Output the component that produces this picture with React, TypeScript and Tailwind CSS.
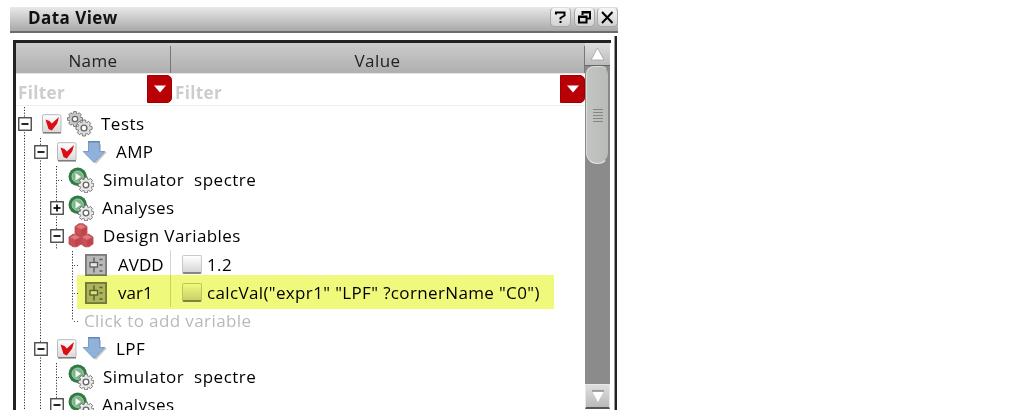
import React from "react";

type Guide = "none" | "line" | "tee" | "end" | "minus" | "plus" | "start";

const label = "whitespace-pre text-[17px] leading-[28px] font-medium text-black";

function GuideCell({ kind }: { kind: Guide }) {
  const hasBox = kind === "minus" || kind === "plus" || kind === "start";
  const bottom = kind === "end" ? 14 : 28;
  const top = kind === "start" ? -3 : 0;
  return (
    <svg width="16" height="28" viewBox="0 0 16 28" className="shrink-0 overflow-visible">
      {kind !== "none" && (
        <path d={`M8.5 ${top}V${bottom}`} stroke="#333" strokeDasharray="1.2 1.6" fill="none" />
      )}
      {(kind === "tee" || kind === "end") && (
        <path d="M10 14.5H14" stroke="#444" strokeDasharray="1 2" fill="none" />
      )}
      {hasBox && (
        <g>
          <rect x="2.75" y="7.75" width="12.5" height="12.5" fill="#fff" stroke="#4d4d4d" strokeWidth="1.4" />
          <path d="M5.5 14H12.5" stroke="#000" strokeWidth="1.7" />
          {kind === "plus" && <path d="M9 10.5V17.5" stroke="#000" strokeWidth="1.7" />}
        </g>
      )}
    </svg>
  );
}

function CheckBox() {
  return (
    <svg width="20" height="20" viewBox="0 0 20 20" className="shrink-0">
      <defs>
        <linearGradient id="box" x2="0" y2="1">
          <stop stopColor="#fff" />
          <stop offset="1" stopColor="#d8d8d8" />
        </linearGradient>
      </defs>
      <rect x=".5" y=".7" width="18.5" height="18" rx="1.5" fill="url(#box)" stroke="#b9b9b9" />
      <path d="M1 18.8H19" stroke="#777" strokeWidth="1.4" />
      <path d="M3.5 5.5L7.5 7L9.8 9.5L17 3L15.2 9.5L9.8 16.5L6.5 15Z" fill="#dc0c14" />
    </svg>
  );
}

function EmptyBox() {
  return (
    <div className="h-[19px] w-5 shrink-0 rounded-[2px] border border-[#c9c9c9] border-b-2 border-b-[#858585] bg-linear-to-b from-white to-[#d6d6d6]" />
  );
}

function Gear({ x, y, s, fill }: { x: number; y: number; s: number; fill: string }) {
  const teeth = [0, 45, 90, 135, 180, 225, 270, 315];
  return (
    <g transform={`translate(${x} ${y}) scale(${s})`}>
      {teeth.map((a) => (
        <path key={a} d="M-2 -5L-1.5 -8H1.5L2 -5" transform={`rotate(${a})`} fill={fill} stroke="#6b6b6b" strokeWidth=".9" />
      ))}
      <circle r="5.8" fill={fill} />
      <circle r="2.9" fill="#fff" stroke="#666" strokeWidth="1.4" />
    </g>
  );
}

function GearsIcon() {
  return (
    <svg width="26" height="26" viewBox="0 0 26 26" className="shrink-0">
      <Gear x={8} y={8} s={0.93} fill="#c9c9c9" />
      <Gear x={17} y={17} s={1} fill="#dcdcdc" />
    </svg>
  );
}

function RunIcon() {
  return (
    <svg width="26" height="26" viewBox="0 0 26 26" className="shrink-0">
      <circle cx="9.7" cy="9.7" r="9.2" fill="#2f7b43" />
      <circle cx="9.7" cy="9.7" r="5.7" fill="#7db48a" stroke="#a9cfb2" strokeWidth="1" />
      <path d="M7.5 6L13 9.7L7.5 13.4Z" fill="#f4fbf5" />
      <Gear x={18} y={18} s={0.97} fill="#e9e9e9" />
    </svg>
  );
}

function ArrowIcon() {
  return (
    <svg width="25" height="25" viewBox="0 0 25 25" className="shrink-0">
      <path d="M9 4H19V12H25L14 24L4 12H9Z" fill="#c9c9c9" />
      <path d="M6.5 1.5H17.5V11.5H22.8L12 22.5L1.2 11.5H6.5Z" fill="#90b1da" stroke="#7a9bc5" />
      <path d="M6 1.8H18" stroke="#5f84b2" strokeWidth="1.3" />
    </svg>
  );
}

function CubesIcon() {
  const spots = [[13, 7], [7, 17.5], [19, 17.5]];
  return (
    <svg width="26" height="26" viewBox="0 0 26 26" className="shrink-0">
      {spots.map(([x, y]) => (
        <g key={`${x}-${y}`} transform={`translate(${x} ${y})`}>
          <path d="M-6 -3.5L-2 -6.3H2L6 -3.5V3.5L2 6.3H-2L-6 3.5Z" fill="#c94f54" stroke="#b5484d" strokeWidth=".8" />
          <path d="M-5 -3.3L0 -5.7L5 -3.3L0 -.8Z" fill="#dc7a7d" />
          <path d="M0 0L5.3 -2.5V3L0 5.8Z" fill="#bc464b" />
        </g>
      ))}
    </svg>
  );
}

function VariableIcon() {
  return (
    <svg width="22" height="22" viewBox="0 0 22 22" className="shrink-0">
      <rect x=".9" y=".9" width="20.2" height="20.2" fill="#b9b9b9" stroke="#747474" strokeWidth="1.7" />
      <path d="M9 3.5V18.5" stroke="#5d5d5d" strokeWidth="1.4" />
      <rect x="5" y="8.5" width="7.5" height="4.5" fill="#e8e8e8" stroke="#5d5d5d" strokeWidth="1.3" />
      <path d="M14.5 5.5H17.5M14.5 11H17.5M14.5 17H17.5" stroke="#5d5d5d" strokeWidth="1.4" />
    </svg>
  );
}

function Row({ guides, children }: { guides: Guide[]; children: React.ReactNode }) {
  return (
    <div className="flex h-[28.1px] shrink-0 items-center">
      {guides.map((g, i) => (
        <GuideCell key={i} kind={g} />
      ))}
      {children}
    </div>
  );
}

function TestRow({ name }: { name: string }) {
  return (
    <Row guides={["line", "minus"]}>
      <div className="ml-[9px]"><CheckBox /></div>
      <div className="ml-[5px]"><ArrowIcon /></div>
      <span className={`${label} ml-[9px] tracking-[0.4px]`}>{name}</span>
    </Row>
  );
}

function SimulatorRow() {
  return (
    <Row guides={["line", "line", "tee"]}>
      <div className="ml-1"><RunIcon /></div>
      <span className={`${label} ml-[9px] tracking-[0.5px]`}>Simulator  spectre</span>
    </Row>
  );
}

function AnalysesRow({ kind }: { kind: Guide }) {
  return (
    <Row guides={["line", "line", kind]}>
      <div className="ml-1"><RunIcon /></div>
      <span className={`${label} ml-[8px] tracking-[0.4px]`}>Analyses</span>
    </Row>
  );
}

function VariableRow({ name, value }: { name: string; value: string }) {
  return (
    <Row guides={["line", "line", "none", "tee"]}>
      <div className="ml-[5px]"><VariableIcon /></div>
      <span className={`${label} ml-[11px] w-[52px]`}>{name}</span>
      <div className="h-full w-px bg-[#d5d5d5]" />
      <div className="ml-[11px]"><EmptyBox /></div>
      <span className={`${label} ml-[5px] tracking-[0.36px]`}>{value}</span>
    </Row>
  );
}

function FilterField({ width }: { width: string }) {
  return (
    <div className={`flex items-start justify-between pt-px ${width}`}>
      <span className="pl-[2px] text-[17px] font-bold leading-[35px] tracking-[0.35px] text-[#cfcccf]">Filter</span>
      <div className="flex h-7 w-[25px] items-center justify-center rounded-r-[5px] border border-[#a00000] bg-[#b90007]">
        <svg width="12" height="8" viewBox="0 0 12 8"><path d="M0 .5H12L6 7.5Z" fill="#fff" /></svg>
      </div>
    </div>
  );
}

function TitleButton({ children }: { children: React.ReactNode }) {
  return (
    <div className="flex h-5 w-[21px] items-center justify-center rounded-[5px] border border-[#a6a6a6] border-t-[#dddddd] bg-linear-to-b from-[#f5f5f5] to-[#d2d2d2]">
      <svg width="15" height="15" viewBox="0 0 15 15" fill="none" stroke="#000" strokeWidth="2">{children}</svg>
    </div>
  );
}

function ScrollBar() {
  return (
    <div className="flex h-[366px] w-[25px] shrink-0 flex-col bg-[#8b8b8b]">
      <div className="flex h-[23px] items-center justify-center border-b border-[#666] bg-linear-to-b from-[#dedede] to-[#bcbcbc]">
        <svg width="15" height="14" viewBox="0 0 15 14"><path d="M7.5 1L14 13H1Z" fill="#fff" stroke="#999" strokeWidth=".7" /></svg>
      </div>
      <div className="mx-px flex h-[98px] flex-col items-center justify-center gap-[2px] rounded-t-[8px] rounded-b-[11px] border border-[#dadada] border-r-[#888] border-b-[#e2e2e2] bg-linear-to-r from-[#c2c5c2] to-[#b9bbb9]">
        {[0, 1, 2, 3, 4].map((n) => (
          <div key={n} className="h-px w-[10px] bg-[#858585]" />
        ))}
      </div>
      <div className="mt-auto flex h-[25px] items-center justify-center border border-b-2 border-[#e8e8e8] border-b-[#555] bg-linear-to-b from-[#dedede] to-[#bababa]">
        <svg width="14" height="13" viewBox="0 0 14 13"><path d="M1 1H13L7 12Z" fill="#fff" /><path d="M1 1H13" stroke="#777" strokeWidth="1.3" /></svg>
      </div>
    </div>
  );
}

export default function App() {
  return (
    <div className="h-[410px] w-[1013px] overflow-hidden bg-white pt-[7px] pl-[10px] font-['Open_Sans','Noto_Sans',sans-serif]">
      <header className="flex h-[26px] w-[608px] items-start justify-between border-b-2 border-[#6c6c6c] bg-linear-to-b from-[#e9e9e9] to-[#a9a9a9] pl-[18px]">
        <h1 className="text-[17px] font-bold leading-[21px] tracking-[0.45px] text-[#111]">Data View</h1>
        <div className="flex gap-[2.5px]">
          <TitleButton><path d="M3 4.5V2.5H11.5V5.5L7.5 8V9.5M7.5 11V13" /></TitleButton>
          <TitleButton>
            <path d="M5.5 5V2H13V8.5H10M5 2.5H13.5" />
            <path d="M2 6.5H9.5V12.5H2ZM1 7H10" />
          </TitleButton>
          <TitleButton><path d="M2 2L12.5 13M12.5 2L2 13" /></TitleButton>
        </div>
      </header>
      <div className="mt-[3px] ml-[3px] flex h-[374px] w-[604px]">
        <main className="mt-1 flex w-[598px] border-t-[3px] border-l-[3px] border-[#222]">
          <div className="flex w-[569px] shrink-0 flex-col overflow-hidden">
            <div className="flex h-[30px] shrink-0 bg-linear-to-b from-[#cdcacd] via-[#bcbebc] to-[#afafb0] text-[17px] leading-[36px] text-[#222]">
              <div className="w-[154px] text-center tracking-[0.4px]">Name</div>
              <div className="mt-[3px] w-px bg-[#777]" />
              <div className="w-[413px] text-center tracking-[0.4px]">Value</div>
              <div className="mt-[3px] w-px bg-[#777]" />
            </div>
            <div className="flex h-[33px] shrink-0 gap-[1px] border-t border-[#e5e5e5] border-b border-b-[#eeeeee]">
              <FilterField width="w-[156px]" />
              <FilterField width="w-[412px]" />
            </div>
            <div className="relative mt-[4px] flex shrink-0 flex-col">
              <Row guides={["start"]}>
                <div className="ml-[10px]"><CheckBox /></div>
                <div className="ml-[5px]"><GearsIcon /></div>
                <span className={`${label} ml-2 tracking-[0.5px]`}>Tests</span>
              </Row>
              <TestRow name="AMP" />
              <SimulatorRow />
              <AnalysesRow kind="plus" />
              <Row guides={["line", "line", "minus"]}>
                <div className="ml-1"><CubesIcon /></div>
                <span className={`${label} ml-[9px] tracking-[0.43px]`}>Design Variables</span>
              </Row>
              <VariableRow name="AVDD" value="1.2" />
              <VariableRow name="var1" value={'calcVal("expr1" "LPF" ?cornerName "C0")'} />
              <Row guides={["line", "line", "none", "end"]}>
                <span className="ml-1 text-[17px] leading-[28px] tracking-[0.4px] text-[#b9b9b9]">Click to add variable</span>
              </Row>
              <TestRow name="LPF" />
              <SimulatorRow />
              <AnalysesRow kind="minus" />
              <div className="absolute top-[165px] left-[61px] h-[34px] w-[477px] bg-[#effa7c] mix-blend-multiply" />
            </div>
          </div>
          <ScrollBar />
        </main>
        <div className="ml-[3px] w-[3px] border-r-2 border-l border-l-[#999] border-r-[#222]" />
      </div>
    </div>
  );
}
